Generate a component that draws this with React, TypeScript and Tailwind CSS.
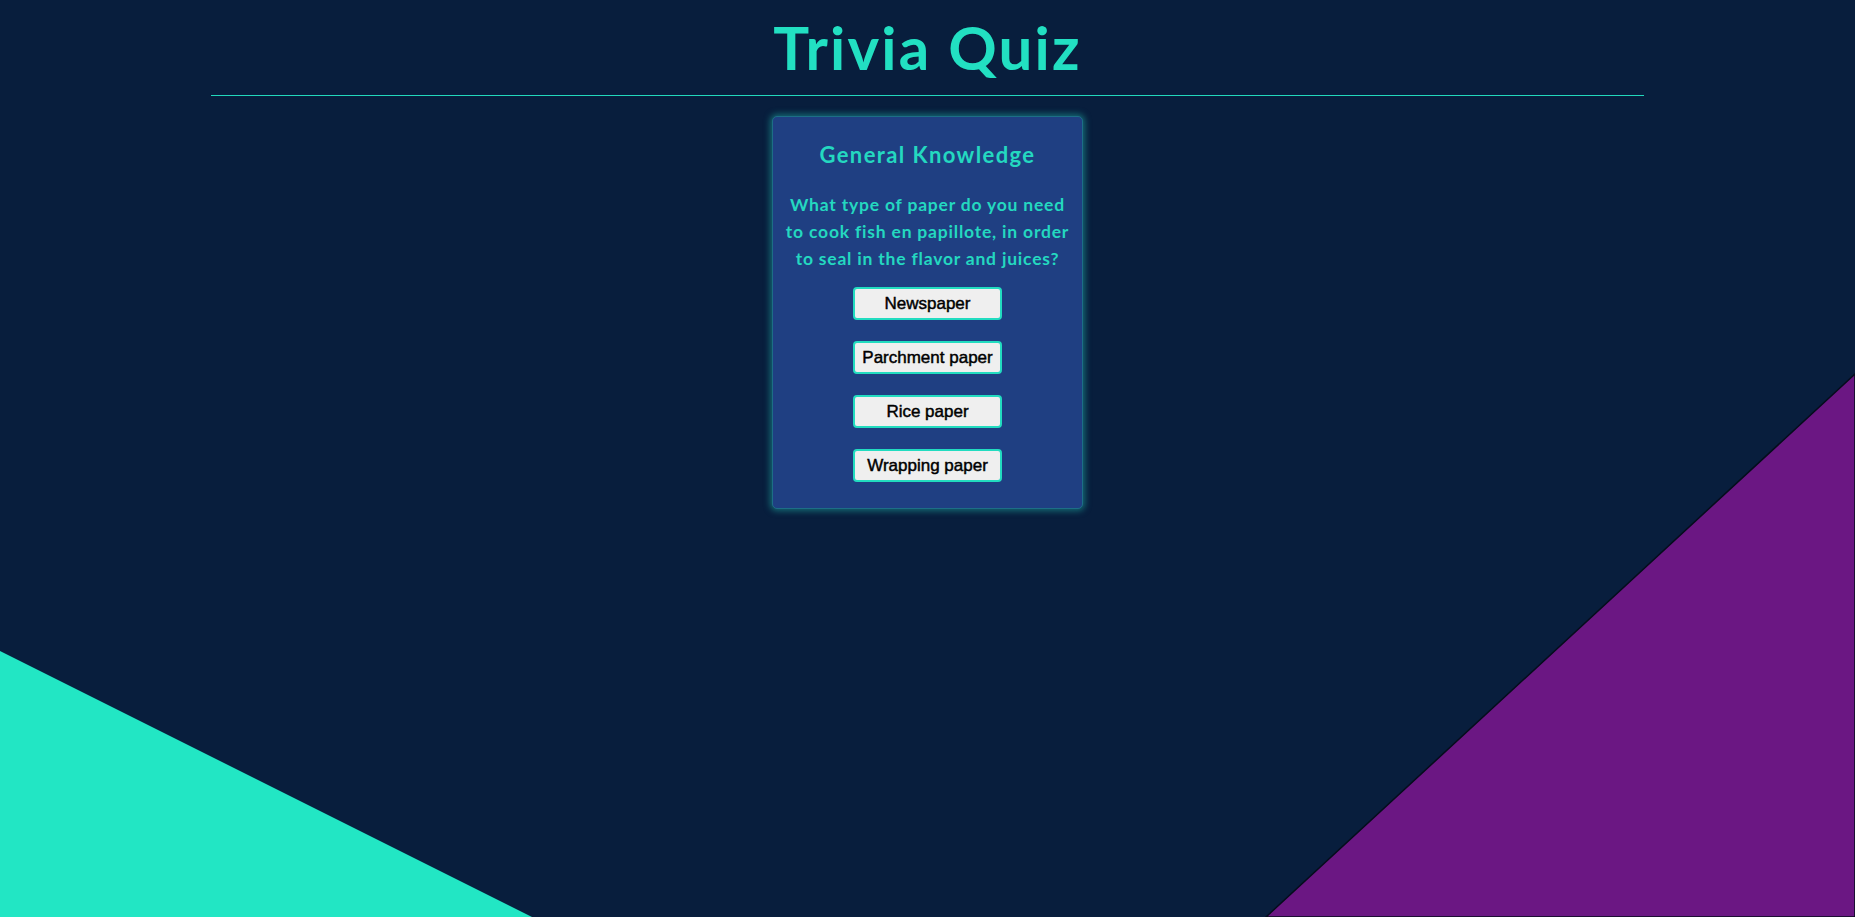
import * as React from "react";

const answers = ["Newspaper", "Parchment paper", "Rice paper", "Wrapping paper"];

function App() {
  return (
    <div className="relative min-h-[917px] overflow-hidden bg-[#081e3d] font-['Lato','Open_Sans',sans-serif]">
      {/* background shapes */}
      <svg
        className="absolute inset-0 h-full w-full"
        viewBox="0 0 1855 917"
        preserveAspectRatio="none"
      >
        <polygon points="0,651 532,917 0,917" fill="#22e6c4" />
        <polygon points="1855,374 1855,917 1266,917" fill="#6b1783" stroke="#050d1c" strokeWidth="1.5" />
      </svg>

      <div className="relative">
        {/* Header */}
        <h1 className="pt-[12px] text-center text-[60px] font-bold leading-[70px] tracking-[2.2px] text-[#22e0c2]">
          Trivia Quiz
        </h1>
        <div className="mx-[211px] mt-[13px] h-px bg-[#22d8bc]" />

        {/* Card */}
        <div className="mx-auto mt-[20px] w-[311px] rounded-[5px] border border-[#1d6e86] bg-[#1f3f82] px-[10px] pb-[26px] pt-[23px] text-center shadow-[0_0_6px_2px_rgba(30,170,160,0.55)]">
          <h2 className="text-[22px] font-bold leading-[30px] tracking-[1.4px] text-[#24d8c0]">General Knowledge</h2>
          <p className="mt-[22px] text-[17.5px] font-bold leading-[26.8px] tracking-[0.8px] text-[#24d8c0]">
            What type of paper do you need to cook fish en papillote, in order to seal in the flavor and
            juices?
          </p>
          <div className="mt-[15px] flex flex-col items-center gap-[21px]">
            {answers.map((a) => (
              <button
                key={a}
                className="h-[33px] w-[149px] rounded-[4px] border-2 border-[#22dcc0] bg-[#efefef] font-['Liberation_Sans',Arial,sans-serif] text-[17px] text-black [-webkit-text-stroke:0.45px_black]"
              >
                {a}
              </button>
            ))}
          </div>
        </div>
      </div>
    </div>
  );
}

export default App;
